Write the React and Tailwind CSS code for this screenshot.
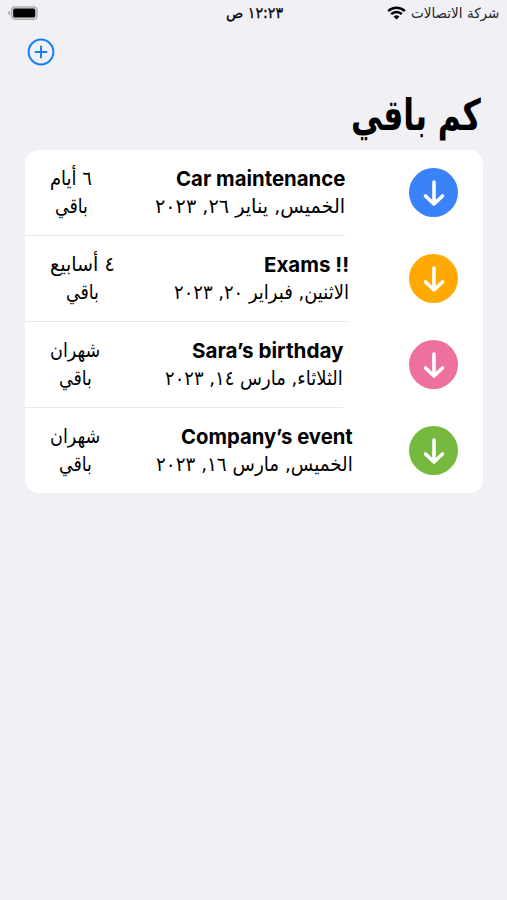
import { useLayoutEffect, useRef, useState } from "react";

// One line of text, condensed or widened horizontally to fill its box.
function Fit({ width, dir = "rtl", className = "", children }) {
  const ref = useRef(null);
  const [scale, setScale] = useState(1);
  useLayoutEffect(() => {
    setScale(width / ref.current.offsetWidth);
  }, [width]);
  return (
    <div className="flex" dir="ltr" style={{ width }}>
      <span
        ref={ref}
        dir={dir}
        className={`block shrink-0 origin-left whitespace-nowrap ${className}`}
        style={{ transform: `scaleX(${scale})` }}
      >
        {children}
      </span>
    </div>
  );
}

const events = [
  { title: "Car maintenance", tw: 169, date: "الخميس, يناير ٢٦, ٢٠٢٣", dw: 190, end: 345, left: "٦ أيام", lw: 42, rest: 33, color: "bg-[#3a82f7]" },
  { title: "Exams !!", tw: 85, date: "الاثنين, فبراير ٢٠, ٢٠٢٣", dw: 175, end: 349, left: "٤ أسابيع", lw: 65, rest: 33, color: "bg-[#ffa902]" },
  { title: "Sara’s birthday", tw: 151, date: "الثلاثاء, مارس ١٤, ٢٠٢٣", dw: 178, end: 343, left: "شهران", lw: 50, rest: 33, color: "bg-[#ee709e]" },
  { title: "Company’s event", tw: 172, date: "الخميس, مارس ١٦, ٢٠٢٣", dw: 197, end: 353, left: "شهران", lw: 50, rest: 33, color: "bg-[#77b93e]" },
];

function EventRow({ event, last }) {
  return (
    <div className="flex h-[86px] justify-between">
      <div
        className={`flex h-full justify-between pl-[25px] pt-[14px] ${last ? "" : "border-b border-[#e9e9eb]"}`}
        style={{ width: event.end - 25 }}
      >
        <div className="flex h-14 flex-col items-center">
          <Fit width={event.lw} className="text-[20px] leading-7">{event.left}</Fit>
          <Fit width={event.rest} className="text-[20px] leading-7">باقي</Fit>
        </div>
        <div className="flex h-14 flex-col items-end">
          <Fit width={event.tw} dir="ltr" className="font-['Inter',sans-serif] text-[20.5px] font-bold leading-[30px] -mb-0.5">{event.title}</Fit>
          <Fit width={event.dw} className="text-[20px] leading-7">{event.date}</Fit>
        </div>
      </div>
      <div className={`mr-[25px] mt-[18px] flex size-[49px] items-center justify-center rounded-full ${event.color}`}>
        <svg width="24" height="28" viewBox="0 0 24 28" fill="none" stroke="white" strokeWidth="3.6" strokeLinecap="round" strokeLinejoin="round">
          <path d="M12 3v22M3.5 17 12 25l8.5-8" />
        </svg>
      </div>
    </div>
  );
}

export default function App() {
  return (
    <div className="h-[900px] w-[507px] bg-[#f1f0f5] font-['DejaVu_Sans',sans-serif] text-black">
      <header className="flex h-[26px] items-center pl-2 pr-2">
        <svg width="30" height="14" viewBox="0 0 30 14">
          <path d="M2 4.8v4.4Q0 8.5 0 7t2-2.200Z" fill="#aaa" />
          <rect x="3.500" y=".8" width="25.500" height="12.600" rx="3.500" fill="#d8d8da" stroke="#aaa" strokeWidth="1.300" />
          <rect x="5.200" y="2.600" width="22" height="9" rx="1.500" fill="black" />
        </svg>
        <div className="ml-[188px]">
          <Fit width={57} className="text-[15px] leading-5 [-webkit-text-stroke:0.3px_black]">١٢:٢٣ ص</Fit>
        </div>
        <div className="ml-auto flex items-center gap-[5px]">
          <svg width="19" height="14" viewBox="0 0 19 14" fill="none" stroke="black" strokeWidth="2.500">
            <path d="M1.200 5.100a11.800 11.800 0 0 1 16.600 0M4.200 8.200a7.500 7.500 0 0 1 10.600 0" />
            <path d="M9.500 13.600 6.600 10.700a4.100 4.100 0 0 1 5.800 0Z" fill="black" stroke="none" />
          </svg>
          <Fit width={88} className="text-[14px] leading-5 text-[#252525]">شركة الاتصالات</Fit>
        </div>
      </header>
      <div className="pl-[27px] pt-3">
        <svg width="28" height="28" viewBox="0 0 28 28" fill="none" stroke="#1681f5" strokeWidth="2" strokeLinecap="round">
          <circle cx="14" cy="14" r="12.400" />
          <path d="M8.500 14h11M14 8.500v11" />
        </svg>
      </div>
      <div className="flex h-[84px] justify-end pr-[26px] pt-[19px]">
        <Fit width={130} className="text-[43px] font-bold leading-[60px]">كم باقي</Fit>
      </div>
      <main className="mx-[25px] h-[343px] w-[458px] rounded-[14px] bg-white">
        {events.map((event, i) => (
          <EventRow key={event.title} event={event} last={i === events.length - 1} />
        ))}
      </main>
    </div>
  );
}
